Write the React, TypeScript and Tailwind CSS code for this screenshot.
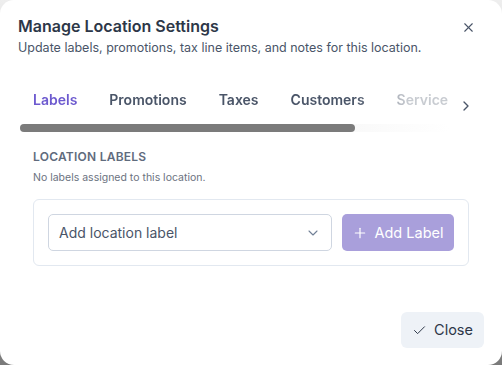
import { Check, ChevronDown, ChevronRight, Plus, X } from "lucide-react";

const tabs = ["Labels", "Promotions", "Taxes", "Customers", "Service"];

function App() {
  return (
    <div className="w-[502px] h-[365px] bg-gradient-to-b from-[#eeeeee] via-[#bdbdbd] to-[#7a7a7a] font-['Inter',sans-serif]">
      <div className="w-full h-full bg-white rounded-[14px] flex flex-col">
        <div className="flex items-start justify-between pl-[18px] pr-[26px] pt-[16px]">
          <div>
            <h2 className="text-[16px] leading-[21px] font-semibold text-[#2d3748]">
              Manage Location Settings
            </h2>
            <p className="text-[12.5px] leading-[18px] mt-[2px] text-[#4a5568]">
              Update labels, promotions, tax line items, and notes for this location.
            </p>
          </div>
          <X className="mt-[4px] w-[15px] h-[15px] text-[#4a5568]" strokeWidth={1.8} />
        </div>

        <div className="flex items-center mt-[33px] pl-[20px] pr-[28px]">
          <div className="flex-1 overflow-hidden">
            <div className="flex gap-[32px] pl-[13px] whitespace-nowrap text-[14px] leading-[20px] font-semibold text-[#4a5568] [mask-image:linear-gradient(to_right,black_78%,rgba(0,0,0,0.3)_90%,rgba(0,0,0,0.3)_100%)]">
              {tabs.map((t, i) => (
                <span key={t} className={i === 0 ? "text-[#6d5acf]" : ""}>
                  {t}
                </span>
              ))}
            </div>
            <div className="mt-[14px] h-[8px] w-full bg-gradient-to-r from-[#f0f0f0] via-[#f2f2f2] to-white rounded-full">
              <div className="h-full w-[335px] bg-[#7b7b7b] rounded-full" />
            </div>
          </div>
          <ChevronRight className="ml-[8px] mb-[10px] w-[16px] h-[16px] text-[#4a5568]" strokeWidth={2} />
        </div>

        <div className="px-[33px] mt-[17px]">
          <div className="text-[12px] leading-[16px] font-semibold tracking-[0.02em] text-[#5f6b7d]">
            LOCATION LABELS
          </div>
          <div className="text-[10.5px] leading-[14px] mt-[6px] text-[#6b7280]">
            No labels assigned to this location.
          </div>
          <div className="mt-[14px] border border-[#e2e8f0] rounded-[6px] px-[14px] py-[14px] flex gap-[10px]">
            <div className="w-[284px] h-[37px] border border-[#cfd6e1] rounded-[5px] flex items-center justify-between pl-[10px] pr-[10px]">
              <span className="text-[14px] text-[#4a5568]">Add location label</span>
              <ChevronDown className="w-[16px] h-[16px] text-[#718096]" strokeWidth={1.6} />
            </div>
            <button className="h-[37px] w-[112px] rounded-[5px] bg-[#a99fdb] text-white flex items-center justify-center gap-[6px] text-[14.5px]">
              <Plus className="w-[16px] h-[16px]" strokeWidth={1.8} />
              Add Label
            </button>
          </div>
        </div>

        <div className="flex justify-end mt-auto pr-[18px] pb-[17px]">
          <button className="h-[36px] w-[83px] rounded-[6px] bg-[#eef2f7] text-[#2d3748] flex items-center justify-center gap-[7px] text-[14.5px]">
            <Check className="w-[15px] h-[15px]" strokeWidth={1.6} />
            Close
          </button>
        </div>
      </div>
    </div>
  );
}

export default App;
